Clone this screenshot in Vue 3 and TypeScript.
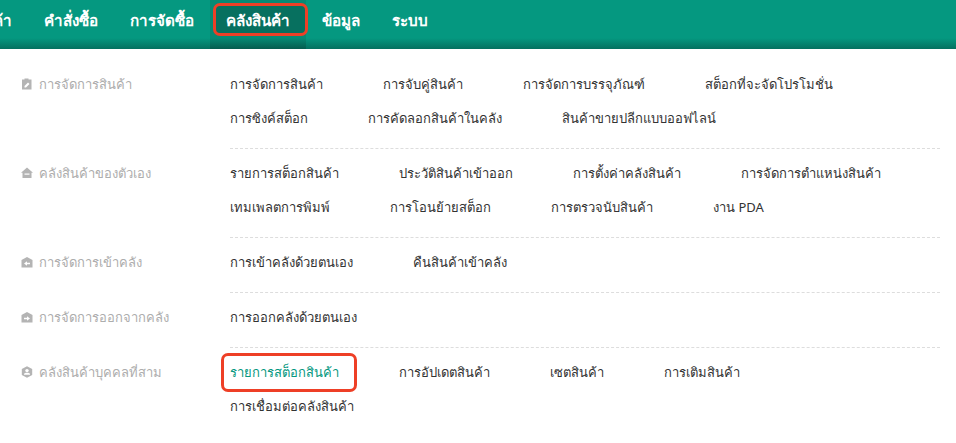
<script setup lang="ts">
interface Section { icon: string; title: string; rows: string[]; }
const nav = ['คำสั่งซื้อ', 'การจัดซื้อ', 'คลังสินค้า', 'ข้อมูล', 'ระบบ'];
const sections: Section[] = [
  { icon: 'clip', title: 'การจัดการสินค้า', rows: ['การจัดการสินค้า', 'การจับคู่สินค้า', 'การจัดการบรรจุภัณฑ์', 'สต็อกที่จะจัดโปรโมชั่น', 'การซิงค์สต็อก', 'การคัดลอกสินค้าในคลัง', 'สินค้าขายปลีกแบบออฟไลน์'] },
  { icon: 'home', title: 'คลังสินค้าของตัวเอง', rows: ['รายการสต็อกสินค้า', 'ประวัติสินค้าเข้าออก', 'การตั้งค่าคลังสินค้า', 'การจัดการตำแหน่งสินค้า', 'เทมเพลตการพิมพ์', 'การโอนย้ายสต็อก', 'การตรวจนับสินค้า', 'งาน PDA'] },
  { icon: 'in', title: 'การจัดการเข้าคลัง', rows: ['การเข้าคลังด้วยตนเอง', 'คืนสินค้าเข้าคลัง'] },
  { icon: 'out', title: 'การจัดการออกจากคลัง', rows: ['การออกคลังด้วยตนเอง'] },
  { icon: 'third', title: 'คลังสินค้าบุคคลที่สาม', rows: ['รายการสต็อกสินค้า', 'การอัปเดตสินค้า', 'เซตสินค้า', 'การเติมสินค้า', 'การเชื่อมต่อคลังสินค้า'] },
];
const breaks: Record<string, number> = { 0: 4, 1: 4, 4: 4 };
function rowsOf(s: Section, i: number): string[][] {
  const b = breaks[i];
  return b ? [s.rows.slice(0, b), s.rows.slice(b)] : [s.rows];
}
</script>

<template>
  <div class="page">
    <header class="topbar">
      <span class="nav-item first">สินค้า</span>
      <span v-for="n in nav" :key="n" class="nav-item" :class="{ active: n === 'คลังสินค้า' }">
        <i v-if="n === 'คลังสินค้า'" class="mark nav-mark"></i>
        <span class="nav-text">{{ n }}</span>
      </span>
    </header>
    <main class="menu">
      <section v-for="(s, i) in sections" :key="s.title" class="section">
        <div class="label">
          <svg class="icon" viewBox="0 0 12 12" width="12" height="12">
            <template v-if="s.icon === 'clip'">
              <path d="M1 1.500h2.500V.5h4v1H10.500V11.500H1z" fill="#b4b4b4"/>
              <path d="M3.500 9.500v-1.500l3.500-3.500 1.500 1.500L5 9.500z" fill="#fff"/>
            </template>
            <template v-else-if="s.icon === 'home'">
              <path d="M6 .5L0 5.700h1.500V11h9V5.700H12z" fill="#b4b4b4"/>
              <path d="M3.500 6.500h5v1.200h-5z" fill="#fff"/>
            </template>
            <template v-else-if="s.icon === 'in'">
              <path d="M.5 4L6 1l5.500 3v7.500H.5z" fill="#b4b4b4"/>
              <path d="M3 7.500L6 5.200v1.500h3v1.600H6v1.500z" fill="#fff"/>
            </template>
            <template v-else-if="s.icon === 'out'">
              <path d="M.5 4L6 1l5.500 3v7.500H.5z" fill="#b4b4b4"/>
              <path d="M9 7.500L6 5.200v1.500H3v1.600h3v1.500z" fill="#fff"/>
            </template>
            <template v-else>
              <path d="M6 .3l5.200 2.800v5.800L6 11.700.8 8.900V3.100z" fill="#b4b4b4"/>
              <circle cx="6" cy="4.600" r="1.700" fill="#fff"/>
              <path d="M3 8.800h6v-.6c0-1-1.200-1.500-3-1.500s-3 .5-3 1.500z" fill="#fff"/>
            </template>
          </svg>
          <span>{{ s.title }}</span>
        </div>
        <div class="links">
          <div v-for="(r, ri) in rowsOf(s, i)" :key="ri" class="row">
            <span v-for="t in r" :key="t" class="link" :class="{ current: i === 4 && t === 'รายการสต็อกสินค้า' }">
              {{ t }}
              <i v-if="i === 4 && t === 'รายการสต็อกสินค้า'" class="mark link-mark"></i>
            </span>
          </div>
        </div>
      </section>
    </main>
  </div>
</template>

<style scoped>
.page {
  width: 956px;
  height: 443px;
  overflow: hidden;
  background: #fff;
  font-family: "Noto Sans", "DejaVu Sans", sans-serif;
  font-size: 13px;
  color: #333;
}
.topbar {
  display: flex;
  height: 49px;
  background: linear-gradient(to bottom, #059880 0, #059880 38px, #04705f 49px);
  color: #fff;
  font-size: 15.2px;
  font-weight: 600;
}
.nav-item {
  position: relative;
  display: flex;
  align-items: center;
  height: 42px;
  padding: 0 16px;
  white-space: nowrap;
}
.nav-item.first { margin-left: -42px; }
.nav-item.active {
  height: 49px;
  padding-bottom: 7px;
  box-sizing: border-box;
  background: linear-gradient(to bottom, #068a74 0, #068a74 38px, #055c4e 49px);
}
.nav-text { position: relative; }
.mark {
  position: absolute;
  border: 3px solid #ee3f26;
  border-radius: 7px;
  box-sizing: border-box;
}
.nav-mark { left: 3px; top: 3px; width: 95px; height: 33px; background: #07705f; }
.menu { padding: 18px 16px 0 21px; }
.section { display: flex; }
.label {
  width: 209px;
  flex: none;
  display: flex;
  align-items: center;
  gap: 6px;
  height: 34px;
  margin-top: 7px;
  color: #adadad;
  white-space: nowrap;
}
.icon { flex: none; width: 12px; height: 12px; }
.links {
  flex: 1;
  padding: 7px 0 13px;
  border-bottom: 1px dashed #ddd;
}
.section:first-child .links { padding-top: 0; }
.section:first-child .label { margin-top: 0; }
.section:last-child .links { border-bottom: 0; }
.row { display: flex; gap: 60px; height: 34px; align-items: center; }
.link { position: relative; white-space: nowrap; }
.link.current { color: #059880; }
.link-mark { left: -9px; top: -9px; width: 136px; height: 39px; }
</style>
